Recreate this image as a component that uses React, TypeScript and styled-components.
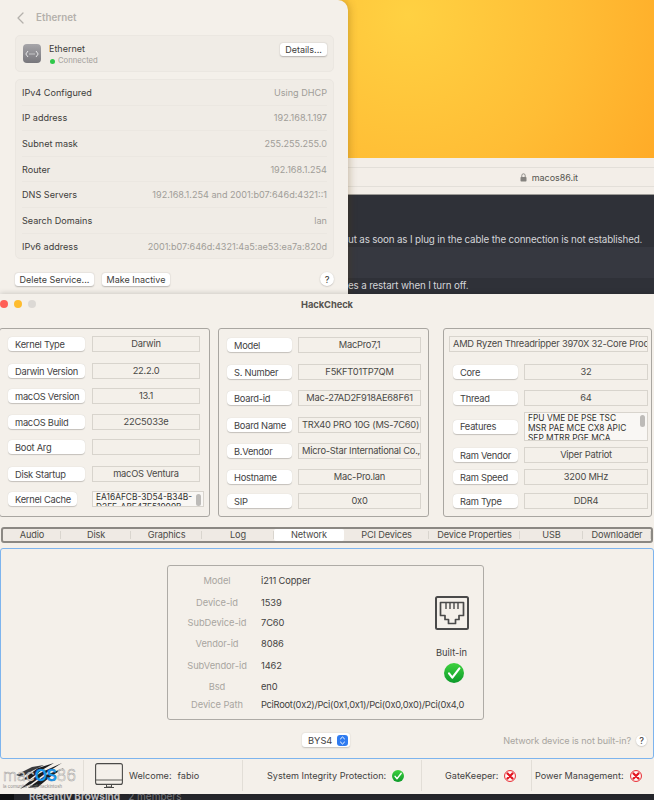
import React from "react";
import styled, { createGlobalStyle } from "styled-components";

const Global = createGlobalStyle`
  html, body { margin: 0; padding: 0; background: #222; }
  body { font-family: Inter, "Noto Sans", "Liberation Sans", sans-serif; -webkit-font-smoothing: antialiased; }
  * { box-sizing: border-box; }
`;

const Page = styled.div`
  width: 654px; height: 800px; overflow: hidden; display: flex; flex-direction: column;
  font-size: 9.3px; color: #3c3b39;
`;

/* ---------- top: settings panel + browser behind ---------- */
const TopRow = styled.div`
  height: 294px; display: flex; flex: none;
  background: #ffc63c;
`;
const Settings = styled.section`
  width: 348px; flex: none; height: 294px; background: #f4f0ea; position: relative; z-index: 1;
  border-top-right-radius: 10px; padding: 0 14px 0 15px;
  box-shadow: 1px 0 8px rgba(90, 60, 0, .3);
  display: flex; flex-direction: column;
`;
const SetHeader = styled.div`
  height: 35px; display: flex; align-items: center; gap: 11px; padding-left: 1px; flex: none;
  font-size: 9.8px; font-weight: 600; color: #b4b1ac;
`;
const Card = styled.div`
  background: #f0ece6; border: 1px solid #ebe7e1; border-radius: 5px;
`;
const ConnCard = styled(Card)`
  height: 37px; display: flex; align-items: flex-start; padding: 7px 6px 0 7px; flex: none;
`;
const ConnIcon = styled.div`
  width: 18px; height: 19px; border-radius: 4px; margin-top: 1px; flex: none;
  background: linear-gradient(#a7a6aa, #77767b); display: flex; align-items: center; justify-content: center;
`;
const ConnText = styled.div`
  margin-left: 8px; flex: 1; display: flex; flex-direction: column; gap: 2px;
`;
const ConnName = styled.div` font-size: 9px; line-height: 11px; color: #3e3d3b; `;
const ConnStatus = styled.div`
  font-size: 7.7px; line-height: 10px; color: #a3a09b; display: flex; align-items: center; gap: 3px; margin-left: 1px;
`;
const Dot = styled.span` width: 5px; height: 5px; border-radius: 50%; background: #2fc84a; `;
const MacButton = styled.div<{ $w: number }>`
  width: ${p => p.$w}px; height: 13px; background: #fff; border-radius: 3px; flex: none;
  box-shadow: 0 .5px 1.5px rgba(0,0,0,.25); display: flex; align-items: center; justify-content: center;
  font-size: 9px; color: #3e3d3b; white-space: nowrap;
`;
const InfoCard = styled(Card)`
  margin-top: 7px; height: 180px; padding: 0 6px; flex: none; display: flex; flex-direction: column;
`;
const InfoRow = styled.div`
  height: 25.6px; flex: none; display: flex; justify-content: space-between; align-items: center;
  font-size: 9.1px; border-bottom: 1px solid #ebe7e1;
  &:last-child { border-bottom: 0; }
`;
const InfoLabel = styled.span` color: #3e3d3b; `;
const InfoValue = styled.span` color: #a09d98; `;
const SetFooter = styled.div`
  margin-top: 13px; display: flex; align-items: center; gap: 8px;
`;
const Spacer = styled.div` flex: 1; `;
const Help = styled.div<{ $size: number }>`
  width: ${p => p.$size}px; height: ${p => p.$size}px; border-radius: 50%; background: #fff; flex: none;
  box-shadow: 0 .5px 1.5px rgba(0,0,0,.25); display: flex; align-items: center; justify-content: center;
  font-size: 9px; font-weight: 500; color: #3e3d3b;
`;

const Browser = styled.div` flex: 1; display: flex; flex-direction: column; min-width: 0; `;
const Orange = styled.div`
  height: 158px; flex: none;
  background: radial-gradient(circle 340px at 60px 15px, #ffd142 0%, #ffbd35 48%, #ffa321 100%);
`;
const UrlBar = styled.div`
  height: 37px; flex: none; padding: 9px 0 8px; background: #f3eee8; border-bottom: 1px solid #9c9a96;
`;
const UrlInner = styled.div`
  height: 20px; border-top: 1px solid #e3dfd9; border-bottom: 1px solid #e3dfd9;
  display: flex; align-items: center; justify-content: flex-end; gap: 5px; padding-right: 76px;
  font-size: 9px; letter-spacing: -.05px; color: #56554f;
`;
const Forum = styled.div`
  flex: 1; background: #2f3138; color: #d4d5d8; font-size: 9.8px; letter-spacing: -.15px; white-space: nowrap; overflow: hidden;
  display: flex; flex-direction: column;
`;
const ForumRow = styled.div<{ $h: number; $alt?: boolean }>`
  height: ${p => p.$h}px; flex: none; padding-left: 0; display: flex;
  align-items: ${p => (p.$h > 40 ? "flex-end" : "flex-start")};
  line-height: 15px;
  background: ${p => (p.$alt ? "#363840" : "transparent")};
`;

/* ---------- HackCheck window ---------- */
const Win = styled.main`
  height: 500px; flex: none; background: #f4f0ea; position: relative; z-index: 2;
  box-shadow: 0 -1px 5px rgba(0,0,0,.16);
  display: flex; flex-direction: column;
`;
const TitleBar = styled.div`
  height: 34px; flex: none; display: grid; grid-template-columns: 1fr auto 1fr; padding-top: 6px;
  font-size: 9.3px; font-weight: 700; color: #55534f;
`;
const Lights = styled.div` display: flex; gap: 6px; height: 8px; `;
const Light = styled.span<{ $c: string }>`
  width: 8px; height: 8px; border-radius: 50%; background: ${p => p.$c};
`;
const TitleText = styled.div` line-height: 10px; letter-spacing: -.03px; `;
const Groups = styled.div`
  height: 189px; flex: none; display: flex; margin-left: -1px;
`;
const Group = styled.div<{ $w: number; $mr: number; $pad: number }>`
  width: ${p => p.$w}px; margin-right: ${p => p.$mr}px; flex: none;
  border: 1px solid #a9a6a1; border-radius: 3px; padding: 7px 0 0 ${p => p.$pad}px;
  display: flex; flex-direction: column;
`;
const Row = styled.div<{ $mt: number; $gap: number; $ml?: number }>`
  display: flex; align-items: center; flex: none; margin-top: ${p => p.$mt}px; gap: ${p => p.$gap}px;
  margin-left: ${p => p.$ml ?? 0}px;
`;
const Pill = styled.div<{ $w: number }>`
  width: ${p => p.$w}px; height: 14px; flex: none; background: #fff; border-radius: 4px; padding-left: 7px;
  box-shadow: 0 .5px 1px rgba(0,0,0,.2); display: flex; align-items: center; white-space: nowrap;
  color: #43423f; letter-spacing: -.25px;
`;
const Field = styled.div<{ $w: number; $left?: boolean }>`
  width: ${p => p.$w}px; height: 16px; flex: none; border: 1px solid #d8d4cd; padding-bottom: 1px;
  display: flex; align-items: center; overflow: hidden; white-space: nowrap; letter-spacing: -.22px;
  justify-content: ${p => (p.$left ? "flex-start" : "center")};
  padding-left: ${p => (p.$left ? 3 : 0)}px; color: #4a4946;
`;
const ListBox = styled.div<{ $w: number; $h: number }>`
  width: ${p => p.$w}px; height: ${p => p.$h}px; flex: none; background: #f9f7f4; border: 1px solid #d8d4cd;
  overflow: hidden; display: flex; justify-content: space-between; padding-left: 3px;
  font-size: 8.4px; line-height: 10px; color: #33322f; white-space: nowrap;
`;
const Thumb = styled.div<{ $h: number }>`
  width: 5px; height: ${p => p.$h}px; border-radius: 3px; background: #bdbbb8; margin: 2px 2px 0 0; flex: none;
`;

const Tabs = styled.div`
  margin: 10px 0 0 1px; width: 652px; height: 16px; flex: none;
  border: 2px solid #8b8883; border-radius: 3px; display: flex; align-items: stretch;
  background: #efeae4;
`;
const Tab = styled.div<{ $w: number; $on?: boolean }>`
  width: ${p => p.$w}px; flex: none; display: flex; align-items: center; justify-content: center;
  font-size: 9.2px; letter-spacing: -.15px; color: #4b4a47; border-radius: 2px; padding-bottom: 1px;
  background: ${p => (p.$on ? "#fff" : "linear-gradient(#d9d5ce,#d9d5ce) right center / 1px 8px no-repeat")};
`;

const Pane = styled.div`
  margin-top: 5px; height: 211px; width: 654px; flex: none; border: 1px solid #7db4ee; border-radius: 3px;
  padding: 16px 6px 0 1px; display: flex; flex-direction: column;
`;
const DeviceBox = styled.div`
  margin-left: 165px; width: 317px; height: 155px; flex: none; border: 1px solid #aeaba6; border-radius: 3px;
  padding: 9px 0 0 5px; display: grid;
  grid-template-columns: 88px 164px 53px 1fr;
  grid-template-rows: 22px 20px 21px 22px 21px 18px 12px;
`;
const DevLabel = styled.div`
  grid-column: 1; text-align: center; line-height: 12px; color: #a8a5a0; white-space: nowrap; letter-spacing: -.05px;
`;
const DevValue = styled.div<{ $wide?: boolean }>`
  grid-column: ${p => (p.$wide ? "2 / span 3" : "2")}; line-height: 12px; color: #43423f; white-space: nowrap;
  letter-spacing: ${p => (p.$wide ? "-.29px" : "-.1px")};
`;
const Side = styled.div`
  grid-column: 3; grid-row: 2 / span 5; display: flex; flex-direction: column; align-items: center; margin-top: -1px;
`;
const BuiltIn = styled.div` margin-top: 17px; line-height: 12px; color: #43423f; `;
const CheckWrap = styled.div` margin: 4px 0 0 5px; line-height: 0; `;
const PaneBottom = styled.div`
  margin-top: 13px; display: grid; grid-template-columns: 300px 48px 1fr; align-items: center; flex: none;
`;
const Select = styled.div`
  width: 48px; height: 14px; background: #fff; border-radius: 3px; box-shadow: 0 .5px 1.5px rgba(0,0,0,.2);
  display: flex; align-items: center; justify-content: space-between; padding: 0 2px 0 6px; color: #43423f;
`;
const Stepper = styled.div`
  width: 11px; height: 11px; background: #2f7bf0; border-radius: 3px; display: flex; align-items: center; justify-content: center; line-height: 0;
`;
const Hint = styled.div`
  justify-content: flex-end; display: flex; align-items: center; gap: 5px; color: #a8a5a0; font-size: 9.1px;
  letter-spacing: -.1px; padding-top: 1px;
`;

const Foot = styled.footer`
  height: 35px; flex: none; display: flex; align-items: stretch; padding-bottom: 3px; padding-top: 1px;
`;
const Cell = styled.div<{ $w: number; $pl: number; $last?: boolean }>`
  width: ${p => p.$w}px; flex: none; padding-left: ${p => p.$pl}px; display: flex; align-items: center;
  border-right: ${p => (p.$last ? "0" : "1px solid #e2ded7")}; white-space: nowrap; color: #43423f; font-size: 9.1px;
`;
const Logo = styled.div`
  position: relative; width: 78px; height: 32px; margin-left: 2px;
`;
const LogoSlash = styled.svg` position: absolute; left: 0; top: 0; `;
const LogoWord = styled.div`
  position: absolute; left: 1px; top: 6px; font-size: 16px; line-height: 18px; font-weight: 300;
  color: #f5f3ef; -webkit-text-stroke: .45px #a5a3a1; white-space: nowrap;
`;
const LogoOS = styled.span`
  color: #1d9cf0; -webkit-text-stroke: .4px #0c6fc4; font-weight: 600; letter-spacing: -.4px;
`;
const LogoSub = styled.div`
  position: absolute; left: 1px; top: 24px; font-size: 4.4px; line-height: 6px; color: #8a8886; white-space: nowrap;
`;
const MonitorWrap = styled.div` line-height: 0; margin-right: 6px; `;
const WelcomeName = styled.span` margin-left: 6px; `;
const StatusIcon = styled.span<{ $ml: number }>` margin-left: ${p => p.$ml}px; line-height: 0; `;

const Strip = styled.div`
  flex: 1; background: #25262b; overflow: hidden; display: flex; gap: 8px;
  padding-left: 29px; font-size: 10px; line-height: 12px;
  box-shadow: inset 14px 0 0 #0f1012;
`;
const StripBold = styled.span` font-weight: 700; color: #b9b9bd; margin-top: -4px; `;
const StripDim = styled.span` color: #75767b; margin-top: -4px; `;

const GreenCheck = ({ size }: { size: number }) => (
  <svg width={size} height={size} viewBox="0 0 24 24">
    <defs>
      <linearGradient id={`g${size}`} x1="0" y1="0" x2="0" y2="1">
        <stop offset="0" stopColor="#3fd23f" />
        <stop offset="1" stopColor="#0c9a2a" />
      </linearGradient>
    </defs>
    <circle cx="12" cy="12" r="12" fill={`url(#g${size})`} />
    <path d="M6 12.5l4 5L18.5 6.5" fill="none" stroke="#fff" strokeWidth="2.6" strokeLinecap="round" strokeLinejoin="round" />
  </svg>
);

const RedCross = () => (
  <svg width="12" height="12" viewBox="0 0 24 24">
    <circle cx="12" cy="12" r="11" fill="#fbe9e6" stroke="#e8323a" strokeWidth="2" />
    <circle cx="12" cy="12" r="7.5" fill="#fff" />
    <path d="M7 7l10 10M17 7L7 17" stroke="#e3141f" strokeWidth="4.4" strokeLinecap="round" />
  </svg>
);

const leftRows = [
  ["Kernel Type", "Darwin", 0],
  ["Darwin Version", "22.2.0", 11],
  ["macOS Version", "13.1", 9],
  ["macOS Build", "22C5033e", 10],
  ["Boot Arg", "", 9],
  ["Disk Startup", "macOS Ventura", 11],
] as const;
const midRows = [
  ["Model", "MacPro7,1", 1, false],
  ["S. Number", "F5KFT01TP7QM", 11, false],
  ["Board-id", "Mac-27AD2F918AE68F61", 10, false],
  ["Board Name", "TRX40 PRO 10G (MS-7C60)", 11, true],
  ["B.Vendor", "Micro-Star International Co.,", 10, true],
  ["Hostname", "Mac-Pro.lan", 10, false],
  ["SIP", "0x0", 8, false],
] as const;
const info = [
  ["IPv4 Configured", "Using DHCP"],
  ["IP address", "192.168.1.197"],
  ["Subnet mask", "255.255.255.0"],
  ["Router", "192.168.1.254"],
  ["DNS Servers", "192.168.1.254 and 2001:b07:646d:4321::1"],
  ["Search Domains", "lan"],
  ["IPv6 address", "2001:b07:646d:4321:4a5:ae53:ea7a:820d"],
];
const tabs: [string, number][] = [
  ["Audio", 58], ["Disk", 70], ["Graphics", 71], ["Log", 72], ["Network", 70],
  ["PCI Devices", 85], ["Device Properties", 91], ["USB", 63], ["Downloader", 68],
];
const device = [
  ["Model", "i211 Copper"],
  ["Device-id", "1539"],
  ["SubDevice-id", "7C60"],
  ["Vendor-id", "8086"],
  ["SubVendor-id", "1462"],
  ["Bsd", "en0"],
];

export default function App() {
  return (
    <Page>
      <Global />
      <TopRow>
        <Settings>
          <SetHeader>
            <svg width="9" height="12" viewBox="0 0 9 12">
              <path d="M7 1L2 6l5 5" fill="none" stroke="#b4b1ac" strokeWidth="1.3" strokeLinecap="round" strokeLinejoin="round" />
            </svg>
            Ethernet
          </SetHeader>
          <ConnCard>
            <ConnIcon>
              <svg width="14" height="8" viewBox="0 0 14 8">
                <path d="M3 1L.8 4 3 7M11 1l2.200 3L11 7" fill="none" stroke="#fff" strokeWidth=".8" />
                <path d="M4.500 4h5" stroke="#fff" strokeWidth="1" strokeDasharray="1 1" />
              </svg>
            </ConnIcon>
            <ConnText>
              <ConnName>Ethernet</ConnName>
              <ConnStatus><Dot />Connected</ConnStatus>
            </ConnText>
            <MacButton $w={47}>Details...</MacButton>
          </ConnCard>
          <InfoCard>
            {info.map(([l, v]) => (
              <InfoRow key={l}><InfoLabel>{l}</InfoLabel><InfoValue>{v}</InfoValue></InfoRow>
            ))}
          </InfoCard>
          <SetFooter>
            <MacButton $w={79}>Delete Service...</MacButton>
            <MacButton $w={68}>Make Inactive</MacButton>
            <Spacer />
            <Help $size={14}>?</Help>
          </SetFooter>
        </Settings>
        <Browser>
          <Orange />
          <UrlBar>
            <UrlInner>
              <svg width="7" height="9" viewBox="0 0 7 9">
                <path d="M1.800 4V2.500a1.700 1.700 0 0 1 3.400 0V4" fill="none" stroke="#85837f" strokeWidth=".9" />
                <rect x=".5" y="4" width="6" height="4.500" rx=".8" fill="#85837f" />
              </svg>
              macos86.it
            </UrlInner>
          </UrlBar>
          <Forum>
            <ForumRow $h={52}>ut as soon as I plug in the cable the connection is not established.</ForumRow>
            <ForumRow $h={31} $alt />
            <ForumRow $h={16}>es a restart when I turn off.</ForumRow>
          </Forum>
        </Browser>
      </TopRow>

      <Win>
        <TitleBar>
          <Lights>
            <Light $c="#ff5f57" />
            <Light $c="#febc2e" />
            <Light $c="#dcd9d5" />
          </Lights>
          <TitleText>HackCheck</TitleText>
          <div />
        </TitleBar>

        <Groups>
          <Group $w={211} $mr={8} $pad={8}>
            {leftRows.map(([l, v, mt]) => (
              <Row key={l} $mt={mt} $gap={7}>
                <Pill $w={77}>{l}</Pill>
                <Field $w={108}>{v}</Field>
              </Row>
            ))}
            <Row $mt={9} $gap={15}>
              <Pill $w={69}>Kernel Cache</Pill>
              <ListBox $w={112} $h={16}>
                <div>EA16AFCB-3D54-B34B-<br />D2FF-ABF47F51909B</div>
                <Thumb $h={12} />
              </ListBox>
            </Row>
          </Group>
          <Group $w={211} $mr={14} $pad={8}>
            {midRows.map(([l, v, mt, left]) => (
              <Row key={l} $mt={mt} $gap={6}>
                <Pill $w={65}>{l}</Pill>
                <Field $w={123} $left={left}>{v}</Field>
              </Row>
            ))}
          </Group>
          <Group $w={209} $mr={0} $pad={5}>
            <Field $w={199} $left>AMD Ryzen Threadripper 3970X 32-Core Proc</Field>
            <Row $mt={12} $gap={6} $ml={4}><Pill $w={65}>Core</Pill><Field $w={124}>32</Field></Row>
            <Row $mt={10} $gap={6} $ml={4}><Pill $w={65}>Thread</Pill><Field $w={124}>64</Field></Row>
            <Row $mt={6} $gap={6} $ml={4}>
              <Pill $w={65}>Features</Pill>
              <ListBox $w={124} $h={29}>
                <div>FPU VME DE PSE TSC<br />MSR PAE MCE CX8 APIC<br />SEP MTRR PGE MCA</div>
                <Thumb $h={12} />
              </ListBox>
            </Row>
            <Row $mt={6} $gap={6} $ml={4}><Pill $w={65}>Ram Vendor</Pill><Field $w={124}>Viper Patriot</Field></Row>
            <Row $mt={6} $gap={6} $ml={4}><Pill $w={65}>Ram Speed</Pill><Field $w={124}>3200 MHz</Field></Row>
            <Row $mt={8} $gap={6} $ml={4}><Pill $w={65}>Ram Type</Pill><Field $w={124}>DDR4</Field></Row>
          </Group>
        </Groups>

        <Tabs>
          {tabs.map(([t, w]) => (
            <Tab key={t} $w={w} $on={t === "Network"}>{t}</Tab>
          ))}
        </Tabs>

        <Pane>
          <DeviceBox>
            {device.map(([l, v]) => (
              <React.Fragment key={l}>
                <DevLabel>{l}</DevLabel>
                <DevValue>{v}</DevValue>
              </React.Fragment>
            ))}
            <Side>
              <svg width="34" height="34" viewBox="0 0 34 34">
                <rect x="1" y="1" width="32" height="32" rx="1.500" fill="#f4f0ea" stroke="#4a4a4a" strokeWidth="2" />
                <path d="M5.500 6.500h23v13h-4.500v4h-3.500v4h-7v-4H10v-4H5.500z" fill="none" stroke="#4a4a4a" strokeWidth="1.700" strokeLinejoin="round" />
                <path d="M11 7v6M15 7v6M19 7v6M23 7v6" stroke="#4a4a4a" strokeWidth="1.400" />
              </svg>
              <BuiltIn>Built-in</BuiltIn>
              <CheckWrap><GreenCheck size={20} /></CheckWrap>
            </Side>
            <DevLabel>Device Path</DevLabel>
            <DevValue $wide>PciRoot(0x2)/Pci(0x1,0x1)/Pci(0x0,0x0)/Pci(0x4,0</DevValue>
          </DeviceBox>
          <PaneBottom>
            <div />
            <Select>
              BYS4
              <Stepper>
                <svg width="7" height="9" viewBox="0 0 7 9">
                  <path d="M1.200 3.200L3.500 1l2.300 2.200M1.200 5.800L3.500 8l2.300-2.200" fill="none" stroke="#fff" strokeWidth="1" />
                </svg>
              </Stepper>
            </Select>
            <Hint>Network device is not built-in?<Help $size={11}>?</Help></Hint>
          </PaneBottom>
        </Pane>

        <Foot>
          <Cell $w={84} $pl={0}>
            <Logo>
              <LogoSlash width="78" height="32" viewBox="0 0 78 32">
                <path d="M18 29L38 13 60 3 44 13 29 24z" fill="#1c1c1e" />
                <path d="M20 20L36 8 52 3 40 10 28 19z" fill="#1c1c1e" />
                <path d="M26 28L44 15 62 8 48 17 36 27z" fill="#1c1c1e" />
                <path d="M14 15L30 7 42 5 30 11 20 17z" fill="#3a3a3c" />
              </LogoSlash>
              <LogoWord>mac<LogoOS>OS</LogoOS>86</LogoWord>
              <LogoSub>la comunità degli hackintosh</LogoSub>
            </Logo>
          </Cell>
          <Cell $w={159} $pl={11}>
            <MonitorWrap>
              <svg width="28" height="26" viewBox="0 0 28 26">
                <rect x=".6" y=".6" width="26.800" height="20.800" rx="2" fill="none" stroke="#4a4a48" strokeWidth="1.100" />
                <path d="M.6 17h26.800" stroke="#4a4a48" strokeWidth=".9" />
                <path d="M11.500 21.500v2.500h5v-2.500M9 24.500h10" fill="none" stroke="#4a4a48" strokeWidth="1" />
              </svg>
            </MonitorWrap>
            Welcome:<WelcomeName>fabio</WelcomeName>
          </Cell>
          <Cell $w={179} $pl={24}>
            System Integrity Protection:
            <StatusIcon $ml={6}><GreenCheck size={12} /></StatusIcon>
          </Cell>
          <Cell $w={110} $pl={23}>
            GateKeeper:
            <StatusIcon $ml={6}><RedCross /></StatusIcon>
          </Cell>
          <Cell $w={122} $pl={3} $last>
            Power Management:
            <StatusIcon $ml={6}><RedCross /></StatusIcon>
          </Cell>
        </Foot>
      </Win>

      <Strip>
        <StripBold>Recently Browsing</StripBold>
        <StripDim>2 members</StripDim>
      </Strip>
    </Page>
  );
}
